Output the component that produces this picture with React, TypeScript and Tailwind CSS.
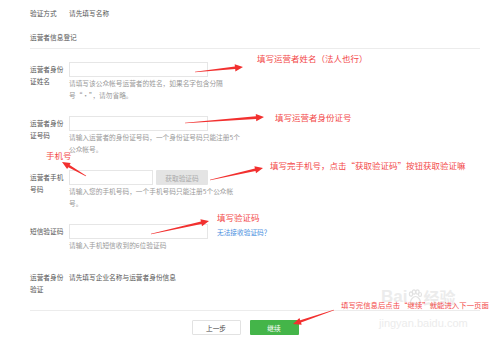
import React from 'react';

const font = { fontFamily: '"Noto Sans CJK SC", "Noto Sans", sans-serif' };

type Pt = [number, number];

// tapered red arrow: thin tail, fat head
const arrowPoints = (tail: Pt, tip: Pt) => {
  const dx = tip[0] - tail[0];
  const dy = tip[1] - tail[1];
  const len = Math.hypot(dx, dy);
  const ux = dx / len;
  const uy = dy / len;
  const nx = -uy;
  const ny = ux;
  const headLen = 8;
  const bx = tip[0] - ux * headLen;
  const by = tip[1] - uy * headLen;
  const p = (x: number, y: number) => `${x.toFixed(1)},${y.toFixed(1)}`;
  return [
    p(tail[0] + nx * 0.3, tail[1] + ny * 0.3),
    p(bx + nx * 1.3, by + ny * 1.3),
    p(bx + nx * 3.6, by + ny * 3.6),
    p(tip[0], tip[1]),
    p(bx - nx * 3.6, by - ny * 3.6),
    p(bx - nx * 1.3, by - ny * 1.3),
    p(tail[0] - nx * 0.3, tail[1] - ny * 0.3),
  ].join(' ');
};

const arrows: Array<[Pt, Pt]> = [
  [[195, 72], [243, 67]],
  [[185, 123], [264, 117]],
  [[86, 176], [62, 162]],
  [[210, 180], [263, 168]],
  [[151, 234], [209, 221]],
  [[334, 310], [293, 324]],
];

const Label = ({ lines }: { lines: string[] }) => (
  <div className="w-[39px] shrink-0 pt-[1px] text-[#555]">
    {lines.map((l) => (
      <div key={l}>{l}</div>
    ))}
  </div>
);

const Input = ({ w }: { w: string }) => <div className={`${w} h-[15px] border border-[#e6e6e6] bg-white`} />;

const Help = ({ lines }: { lines: string[] }) => (
  <div className="text-[#999]">
    {lines.map((l) => (
      <div key={l} className="whitespace-nowrap">{l}</div>
    ))}
  </div>
);

const Paw = () => (
  <svg width="16" height="16" viewBox="0 0 16 16" fill="none" stroke="#e2e2e2" strokeWidth="1.2">
    <ellipse cx="4" cy="5" rx="1.6" ry="2.2" />
    <ellipse cx="7" cy="3" rx="1.6" ry="2.2" />
    <ellipse cx="10.5" cy="3" rx="1.6" ry="2.2" />
    <ellipse cx="13" cy="5.5" rx="1.5" ry="2" />
    <path d="M8.5 7.5c-2.5 0-5 3.5-5 5.5 0 1.8 2 2 5 1.2 3 .8 5 .6 5-1.2 0-2-2.5-5.5-5-5.5z" />
  </svg>
);

export default function App() {
  return (
    <div className="relative w-[500px] h-[342px] overflow-hidden bg-white text-[6.7px] leading-[12px]" style={font}>
      <div className="pl-[30px] pr-[20px] pt-[7px]">
        {/* top */}
        <div className="flex text-[#555]">
          <div className="w-[39px]">验证方式</div>
          <div>请先填写名称</div>
        </div>
        <div className="mt-[12px] pb-[5px] border-b border-[#ececec] text-[#555]">运营者信息登记</div>

        {/* name */}
        <div className="mt-[13px] flex">
          <Label lines={['运营者身份', '证姓名']} />
          <div>
            <Input w="w-[139px]" />
            <Help lines={['请填写该公众帐号运营者的姓名，如果名字包含分隔', '号“·”，请勿省略。']} />
          </div>
        </div>

        {/* id */}
        <div className="mt-[15px] flex">
          <Label lines={['运营者身份', '证号码']} />
          <div>
            <Input w="w-[139px]" />
            <Help lines={['请输入运营者的身份证号码，一个身份证号码只能注册5个', '公众帐号。']} />
          </div>
        </div>

        {/* phone */}
        <div className="mt-[15px] flex">
          <Label lines={['运营者手机', '号码']} />
          <div>
            <div className="flex gap-[3px]">
              <Input w="w-[84px]" />
              <div className="w-[52px] h-[15px] rounded-[1px] bg-[#e4e4e4] text-[#aaa] flex items-center justify-center">获取验证码</div>
            </div>
            <Help lines={['请输入您的手机号码，一个手机号码只能注册5个公众帐', '号。']} />
          </div>
        </div>

        {/* sms */}
        <div className="mt-[15px] flex">
          <Label lines={['短信验证码']} />
          <div>
            <div className="flex items-center">
              <Input w="w-[139px]" />
              <span className="ml-[9px] text-[#4a8fe0]">无法接收验证码？</span>
            </div>
            <Help lines={['请输入手机短信收到的6位验证码']} />
          </div>
        </div>

        {/* verify */}
        <div className="mt-[19px] flex pb-[15px] border-b border-[#ececec]">
          <Label lines={['运营者身份', '验证']} />
          <div className="pt-[1px] text-[#555]">请先填写企业名称与运营者身份信息</div>
        </div>

        <div className="mt-[9px] flex justify-center gap-[9px] pr-[20px]">
          <div className="w-[49px] h-[15px] border border-[#e2e2e2] rounded-[1px] bg-white text-[#444] flex items-center justify-center">上一步</div>
          <div className="w-[49px] h-[15px] rounded-[1px] bg-[#44b549] text-white flex items-center justify-center">继续</div>
        </div>
      </div>

      {/* watermark */}
      <div className="absolute left-[381px] top-[288px] flex items-center text-[#ececec] font-bold leading-none">
        <span className="text-[17px]" style={{ fontFamily: '"Liberation Sans", sans-serif' }}>Bai</span>
        <Paw />
        <span className="text-[16px]">经验</span>
      </div>
      <div className="absolute left-[379px] top-[318px] text-[11px] leading-none text-[#ececec]" style={{ fontFamily: '"Liberation Sans", sans-serif' }}>
        jingyan.baidu.com
      </div>

      {/* annotations */}
      <div className="absolute text-[#f34a4a] text-[8.5px] leading-[12px] whitespace-nowrap left-[257px] top-[52px]">填写运营者姓名（法人也行）</div>
      <div className="absolute text-[#f34a4a] text-[8.5px] leading-[12px] whitespace-nowrap left-[275px] top-[111px]">填写运营者身份证号</div>
      <div className="absolute text-[#f34a4a] text-[8.5px] leading-[12px] whitespace-nowrap left-[46px] top-[149px]">手机号</div>
      <div className="absolute text-[#f34a4a] text-[8.5px] leading-[12px] whitespace-nowrap left-[270px] top-[159px]">填写完手机号，点击“获取验证码”按钮获取验证嘛</div>
      <div className="absolute text-[#f34a4a] text-[8.5px] leading-[12px] whitespace-nowrap left-[217px] top-[211px]">填写验证码</div>
      <div className="absolute text-[#f34a4a] text-[7.4px] leading-[12px] whitespace-nowrap left-[341px] top-[299px]">填写完信息后点击“继续”就能进入下一页面</div>

      <svg className="absolute inset-0 pointer-events-none" width="500" height="342">
        {arrows.map(([a, b], i) => (
          <polygon key={i} points={arrowPoints(a, b)} fill="#f2302f" />
        ))}
      </svg>
    </div>
  );
}
